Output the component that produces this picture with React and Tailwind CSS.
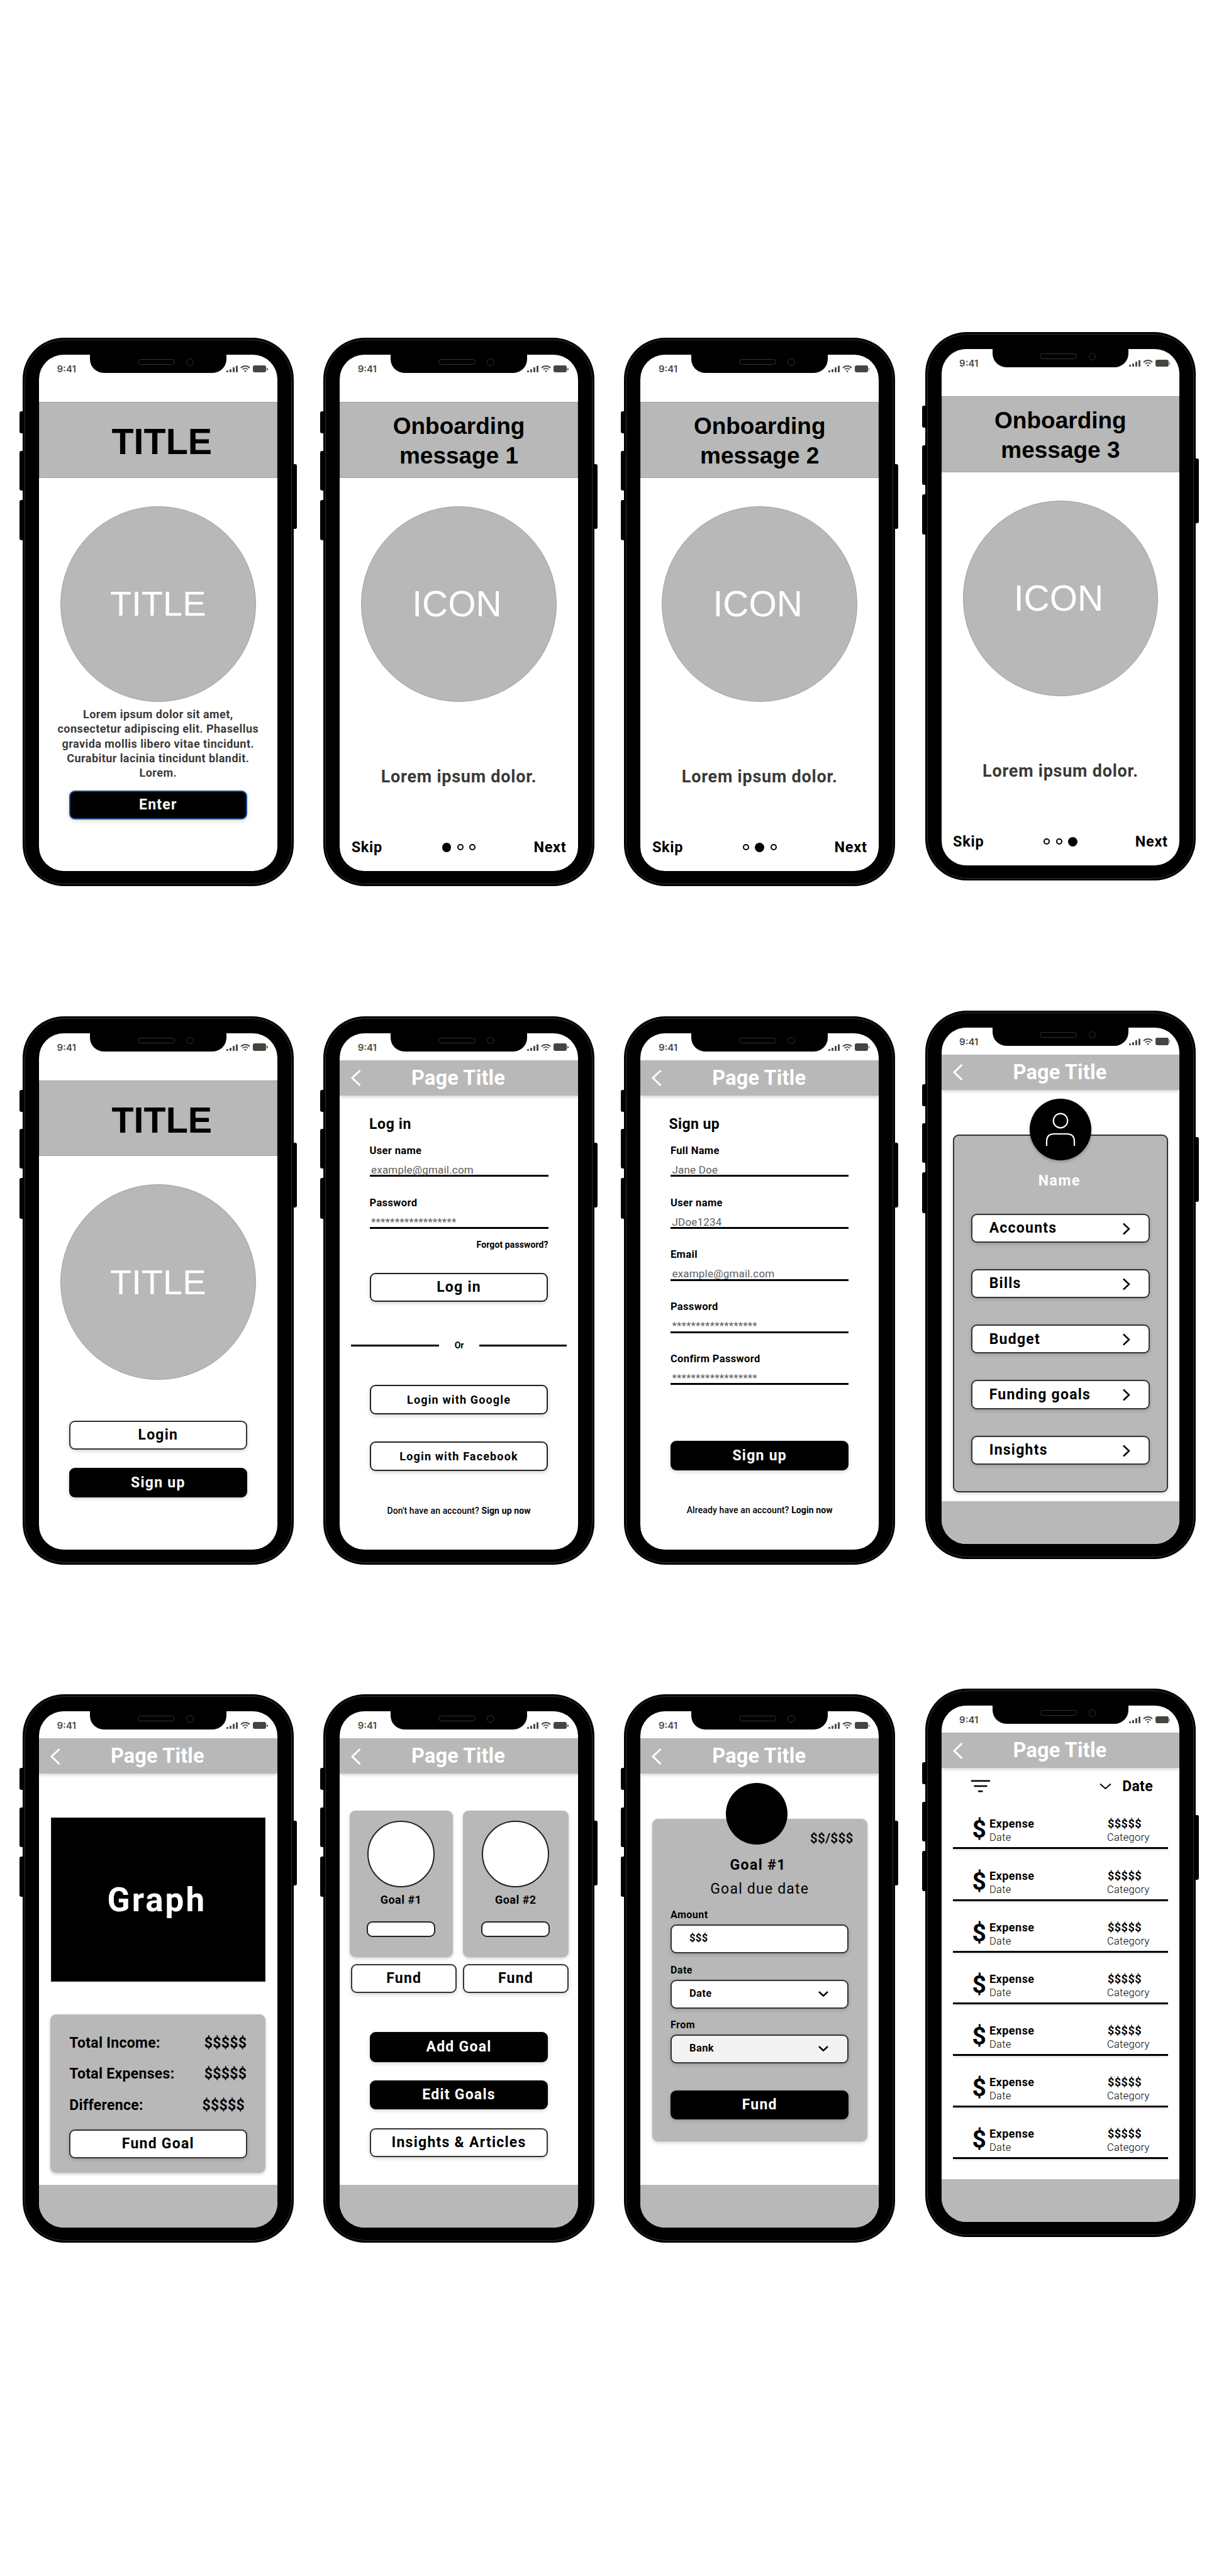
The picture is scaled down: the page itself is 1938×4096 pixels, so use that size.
import React from "react";
import clsx from "clsx";

const BTN_TEXT = "text-[23px] font-bold tracking-[1.25px]";

function StatusBar() {
  return (
    <div className="flex h-[43.3px] w-full shrink-0 items-start justify-between pl-[28.5px] pr-[15px] pt-[12px] text-[#4a4a45]">
      <span className="font-['Inter'] text-[15px] leading-[21px] font-semibold">9:41</span>
      <div className="flex h-[21px] items-center">
        <svg className="h-[11px] w-[18px]" viewBox="0 0 18 11" fill="currentColor">
          <rect x="0" y="8" width="3" height="3" rx="0.8" />
          <rect x="5" y="6" width="3" height="5" rx="0.8" />
          <rect x="10" y="3" width="3" height="8" rx="0.8" />
          <rect x="15" y="0.5" width="3" height="10.5" rx="0.8" />
        </svg>
        <svg className="ml-[4px] h-[11px] w-[16px]" viewBox="0 0 16 11" fill="none" stroke="currentColor" strokeWidth="1.8">
          <path d="M1 4 C5 0 11 0 15 4" />
          <path d="M3.8 6.6 C6.2 4.3 9.8 4.3 12.2 6.6" />
          <path d="M8 11 L5.9 8.7 C7.1 7.7 8.9 7.7 10.1 8.7 Z" fill="currentColor" stroke="none" />
        </svg>
        <span className="ml-[4px] h-[11.5px] w-[21px] rounded-[3px] bg-[#45453f]" />
        <span className="ml-[1px] h-[4px] w-[1.5px] rounded-r-full bg-[#45453f]" />
      </div>
    </div>
  );
}

function Phone({ raised, footer, children }) {
  return (
    <div className={clsx("relative h-[872px] w-[430.7px] shrink-0", raised)}>
      <span className="absolute top-[117px] -left-[5px] h-[35px] w-[8px] rounded-l-[3px] bg-black" />
      <span className="absolute top-[179.5px] -left-[5px] h-[63px] w-[8px] rounded-l-[3px] bg-black" />
      <span className="absolute top-[257.5px] -left-[5px] h-[64.5px] w-[8px] rounded-l-[3px] bg-black" />
      <span className="absolute top-[201px] -right-[5px] h-[103px] w-[8px] rounded-r-[3px] bg-black" />
      <div className="relative h-full w-full rounded-[66px] bg-black px-[26px] pt-[27px] pb-[24px]">
        <div className="pointer-events-none absolute inset-[3px] rounded-[63px] border border-[#333]" />
        <div className="relative flex h-full w-full flex-col items-center overflow-hidden rounded-[39px] bg-white">
          <div className="absolute top-0 left-[81px] h-[29.3px] w-[216.6px] rounded-b-[22px] bg-black">
            <span className="absolute top-[7px] left-[75.5px] h-[9px] w-[59px] rounded-full border border-[#333]" />
            <span className="absolute top-[6px] left-[153px] h-[11.5px] w-[11.5px] rounded-full border border-[#333]" />
          </div>
          <StatusBar />
          {children}
          {footer && <div className="mt-auto h-[67.6px] w-full shrink-0 bg-[#b8b8b8]" />}
        </div>
      </div>
    </div>
  );
}

function Banner({ children }) {
  return (
    <div className="mt-[32px] flex h-[120.3px] w-full shrink-0 items-center justify-center border border-[#a0a0a0] bg-[#b8b8b8] font-['Liberation_Sans'] font-bold text-black">
      {children}
    </div>
  );
}

function Disc({ children }) {
  return (
    <div className="mt-[45.3px] flex h-[310.8px] w-[310.8px] shrink-0 items-center justify-center rounded-full border border-[#a0a0a0] bg-[#b8b8b8] font-['Liberation_Sans'] text-[56px] text-white">
      {children}
    </div>
  );
}

function Button({ dark, className, children }) {
  return (
    <div
      className={clsx(
        "flex w-[283.5px] shrink-0 items-center rounded-[9px] border-2 shadow-[0_2px_6px_rgba(0,0,0,0.18)]",
        dark ? "bg-black text-white" : "bg-white text-black",
        className
      )}
    >
      {children}
    </div>
  );
}

function Label({ className, children }) {
  return <span className={clsx("relative top-[0.5px] w-full text-center", className ?? BTN_TEXT)}>{children}</span>;
}

function PageHeader() {
  return (
    <div className="grid h-[56px] w-full shrink-0 grid-cols-[50px_1fr_50px] items-center bg-[#b8b8b8] text-white shadow-[0_2px_5px_rgba(0,0,0,0.2)]">
      <svg className="ml-[17px] h-[28px] w-[17px]" viewBox="0 0 17 28" fill="none" stroke="currentColor" strokeWidth="3">
        <path d="M15.5 2 L3 14 L15.5 26" />
      </svg>
      <span className="-ml-[2px] text-center text-[32.5px] leading-[57px] font-bold tracking-[0.15px]">Page Title</span>
    </div>
  );
}

function TitleScreen({ children }) {
  return (
    <>
      <Banner>
        <span className="relative top-[3px] left-[6px] text-[57.5px]">TITLE</span>
      </Banner>
      <Disc>TITLE</Disc>
      {children}
    </>
  );
}

function Welcome() {
  return (
    <TitleScreen>
      <p className="mt-[8px] h-[117px] w-[340px] text-center text-[18px] leading-[23.4px] font-bold tracking-[0.44px] text-[#3a3a38]">
        Lorem ipsum dolor sit amet,
        <br />
        consectetur adipiscing elit. Phasellus
        <br />
        gravida mollis libero vitae tincidunt.
        <br />
        Curabitur lacinia tincidunt blandit.
        <br />
        Lorem.
      </p>
      <Button dark className="mt-[16px] h-[46.5px] border-[#1c4f94]">
        <Label>Enter</Label>
      </Button>
    </TitleScreen>
  );
}

function Onboarding({ step }) {
  return (
    <>
      <Banner>
        <p className="relative top-[1.5px] text-center text-[37px] leading-[47px]">
          Onboarding
          <br />
          message {step}
        </p>
      </Banner>
      <Disc>
        <span className="relative -left-[3px] text-[57px]">ICON</span>
      </Disc>
      <p className="mt-[102px] h-[34px] text-[27px] leading-[34px] font-bold tracking-[0.76px] text-[#3a3a38]">Lorem ipsum dolor.</p>
      <div className="mt-[78px] grid h-[32px] w-full grid-cols-3 items-center px-[18.5px] text-[23.5px] font-bold tracking-[0.7px]">
        <span>Skip</span>
        <div className="flex items-center justify-center gap-[9.5px]">
          {[1, 2, 3].map((n) => (
            <span
              key={n}
              className={clsx("rounded-full", n === step ? "h-[14.6px] w-[14.6px] bg-black" : "h-[10px] w-[10px] border-2 border-black")}
            />
          ))}
        </div>
        <span className="text-right">Next</span>
      </div>
    </>
  );
}

function Entry() {
  return (
    <TitleScreen>
      <Button className="mt-[64.7px] h-[46.5px] border-[#333]">
        <Label>Login</Label>
      </Button>
      <Button dark className="mt-[28.4px] h-[47px] border-black">
        <Label>Sign up</Label>
      </Button>
    </TitleScreen>
  );
}

function Field({ label, value, first }) {
  return (
    <div className={clsx("w-full border-b-[3px] border-black", first ? "mt-[17px]" : "mt-[30.3px]")}>
      <div className="relative top-[1px] h-[20px] text-[16.5px] leading-[20px] font-bold tracking-[0.35px]">{label}</div>
      <div className="relative top-[1.5px] mt-[9.5px] h-[20px] pl-[2.5px] text-[17px] leading-[20px] tracking-[0.2px] text-[#606060]">{value}</div>
    </div>
  );
}

const STARS = "******************";

function Login() {
  return (
    <>
      <PageHeader />
      <div className="mt-[30px] flex w-[284px] flex-col">
        <h2 className="relative top-[1px] -ml-[0.5px] h-[30px] text-[23px] leading-[30px] font-bold tracking-[0.6px]">Log in</h2>
        <Field first label="User name" value="example@gmail.com" />
        <Field label="Password" value={STARS} />
        <div className="mt-[15px] h-[20px] text-right text-[14px] leading-[20px] font-bold tracking-[0.1px]">Forgot password?</div>
      </div>
      <Button className="mt-[35px] h-[46px] border-[#222]">
        <Label>Log in</Label>
      </Button>
      <div className="mt-[58px] flex h-[22px] w-[342.5px] items-center">
        <span className="h-[3px] w-[139.5px] bg-black" />
        <span className="flex-1 text-center text-[14px] leading-[22px] font-bold">Or</span>
        <span className="h-[3px] w-[138.5px] bg-black" />
      </div>
      <Button className="mt-[52px] h-[46.5px] border-[#222]">
        <Label className="text-[18px] font-bold tracking-[1.15px]">Login with Google</Label>
      </Button>
      <Button className="mt-[43px] h-[47px] border-[#222]">
        <Label className="text-[18px] font-bold tracking-[1.15px]">Login with Facebook</Label>
      </Button>
      <p className="mt-[53px] h-[20px] text-[14px] leading-[20px] font-medium tracking-[0.12px]">
        Don't have an account? <b className="font-bold">Sign up now</b>
      </p>
    </>
  );
}

function SignUp() {
  return (
    <>
      <PageHeader />
      <div className="mt-[30px] flex w-[283.5px] flex-col">
        <h2 className="relative top-[1px] -ml-[2.5px] h-[30px] text-[23px] leading-[30px] font-bold tracking-[0.4px]">Sign up</h2>
        <Field first label="Full Name" value="Jane Doe" />
        <Field label="User name" value="JDoe1234" />
        <Field label="Email" value="example@gmail.com" />
        <Field label="Password" value={STARS} />
        <Field label="Confirm Password" value={STARS} />
      </div>
      <Button dark className="mt-[88.7px] h-[47px] border-black">
        <Label>Sign up</Label>
      </Button>
      <p className="mt-[53px] h-[20px] text-[14px] leading-[20px] font-medium tracking-[0.12px]">
        Already have an account? <b className="font-bold">Login now</b>
      </p>
    </>
  );
}

function Menu() {
  return (
    <>
      <PageHeader />
      <div className="relative mt-[71.5px] flex h-[568.5px] w-[341.7px] shrink-0 flex-col items-center rounded-[9px] border-2 border-[#333] bg-[#b8b8b8] shadow-[0_2px_5px_rgba(0,0,0,0.15)]">
        <div className="absolute -top-[59.5px] left-[120px] flex h-[98px] w-[98px] justify-center rounded-full bg-black shadow-[0_2px_5px_rgba(0,0,0,0.25)]">
          <svg className="mt-[22.5px] h-[54px] w-[48px]" viewBox="0 0 48 54" fill="none" stroke="white" strokeWidth="2.2">
            <circle cx="24" cy="13" r="11.3" />
            <path d="M2 53 V46 Q2 34 14 34 H34 Q46 34 46 46 V53" />
          </svg>
        </div>
        <p className="mt-[57px] mr-[3px] h-[30px] text-[23px] leading-[30px] font-bold tracking-[1.6px] text-white">Name</p>
        <div className="mt-[36.5px] flex flex-col gap-[42px]">
          {["Accounts", "Bills", "Budget", "Funding goals", "Insights"].map((item) => (
            <Button key={item} className="h-[46.2px] justify-between border-[#333] pr-[28px] pl-[26.5px]">
              <span className={clsx("relative top-[0.5px]", BTN_TEXT)}>{item}</span>
              <svg className="mt-[2px] h-[20px] w-[14px]" viewBox="0 0 14 20" fill="none" stroke="black" strokeWidth="2.5">
                <path d="M2 1.5 L11 10 L2 18.5" />
              </svg>
            </Button>
          ))}
        </div>
      </div>
    </>
  );
}

function Summary() {
  return (
    <>
      <PageHeader />
      <div className="mt-[70.2px] flex h-[260.3px] w-[341.7px] shrink-0 items-center justify-center border border-[#222] bg-black pt-[3px] pr-[4px] text-[53px] font-bold tracking-[3px] text-white">
        Graph
      </div>
      <div className="mt-[52.7px] flex h-[252px] w-[342px] shrink-0 flex-col items-center rounded-[9px] bg-[#b8b8b8] pt-[21px] shadow-[0_2px_5px_rgba(0,0,0,0.2)]">
        {[
          ["Total Income:", ""],
          ["Total Expenses:", ""],
          ["Difference:", "mr-[3.3px]"],
        ].map(([name, shift]) => (
          <div key={name} className="flex h-[49.5px] w-[282px] items-center justify-between text-[23px] font-bold tracking-[0.3px]">
            <span>{name}</span>
            <span className={shift}>$$$$$</span>
          </div>
        ))}
        <Button className="mt-[13px] h-[46.5px] border-[#333]">
          <Label>Fund Goal</Label>
        </Button>
      </div>
    </>
  );
}

function GoalCard({ name, className }) {
  return (
    <div className={clsx("flex h-[233px] flex-col items-center rounded-[9px] bg-[#b8b8b8] pt-[16px] shadow-[0_2px_5px_rgba(0,0,0,0.2)]", className)}>
      <span className="h-[106px] w-[107px] rounded-full border-2 border-[#222] bg-white" />
      <span className="mt-[8px] h-[24px] text-[18px] leading-[24px] font-bold tracking-[0.5px]">{name}</span>
      <span className="mt-[22px] h-[25px] w-[109px] rounded-[9px] border-2 border-[#222] bg-white" />
    </div>
  );
}

function Goals() {
  return (
    <>
      <PageHeader />
      <div className="mt-[58.3px] flex w-[348px] gap-[16.5px]">
        <GoalCard name="Goal #1" className="w-[164px]" />
        <GoalCard name="Goal #2" className="w-[167.5px]" />
      </div>
      <div className="mt-[11px] ml-[3px] flex w-[345.5px] gap-[10px]">
        <Button className="h-[46.5px] !w-[168px] border-[#333]">
          <Label>Fund</Label>
        </Button>
        <Button className="h-[46.5px] !w-[167.5px] border-[#333]">
          <Label>Fund</Label>
        </Button>
      </div>
      <Button dark className="mt-[62px] h-[47.5px] border-black">
        <Label>Add Goal</Label>
      </Button>
      <Button dark className="mt-[29px] h-[46.5px] border-black">
        <Label>Edit Goals</Label>
      </Button>
      <Button className="mt-[29.5px] h-[46.5px] border-[#333]">
        <Label>Insights &amp; Articles</Label>
      </Button>
    </>
  );
}

function ChevronDown() {
  return (
    <svg className="h-[11px] w-[18px]" viewBox="0 0 18 11" fill="none" stroke="black" strokeWidth="2.4">
      <path d="M2 2 L9 8.5 L16 2" />
    </svg>
  );
}

function Select({ label, value, arrow, tint, className }) {
  return (
    <div className={className}>
      <div className="relative top-[0.5px] h-[20px] text-[16px] leading-[20px] font-bold tracking-[0.5px]">{label}</div>
      <Button className={clsx("mt-[5px] h-[46px] justify-between border-[#333] pr-[29px] pl-[28px]", tint)}>
        <span className="text-[16.5px] font-bold tracking-[0.4px]">{value}</span>
        {arrow && <ChevronDown />}
      </Button>
    </div>
  );
}

function FundGoal() {
  return (
    <>
      <PageHeader />
      <div className="relative mt-[71.5px] flex h-[513.7px] w-[342px] shrink-0 flex-col items-center rounded-[9px] bg-[#b8b8b8] shadow-[0_2px_5px_rgba(0,0,0,0.2)]">
        <div className="absolute -top-[57px] left-[117px] h-[98px] w-[98px] rounded-full bg-black" />
        <p className="mt-[16px] mr-[22px] h-[30px] self-end text-[20.5px] leading-[30px] font-semibold tracking-[0.4px]">$$/$$$</p>
        <p className="mt-[13px] mr-[5px] h-[30px] text-[23px] leading-[30px] font-bold tracking-[1.4px]">Goal #1</p>
        <p className="mt-[8px] h-[30px] text-[23px] leading-[30px] tracking-[1.2px]">Goal due date</p>
        <Select className="mt-[16px]" label="Amount" value="$$$" />
        <Select className="mt-[17px]" label="Date" value="Date" arrow />
        <Select className="mt-[16px]" label="From" value="Bank" arrow tint="!bg-[#f3f3f3]" />
        <Button dark className="mt-[43px] h-[46.5px] border-black">
          <Label>Fund</Label>
        </Button>
      </div>
    </>
  );
}

function Expenses() {
  return (
    <>
      <PageHeader />
      <div className="mt-[14px] flex h-[30px] w-[342px] items-center pr-[24px] pl-[29px]">
        <svg className="h-[20px] w-[30px]" viewBox="0 0 30 20" stroke="black" strokeWidth="2.4">
          <path d="M0 1.7 H30 M4.5 10 H25.5 M11 18.3 H18.5" />
        </svg>
        <span className="mr-[17px] ml-auto">
          <svg className="h-[11px] w-[19px]" viewBox="0 0 19 11" fill="none" stroke="black" strokeWidth="2">
            <path d="M1 1.5 L9.5 9 L18 1.5" />
          </svg>
        </span>
        <span className="relative top-[1px] text-[23px] font-bold tracking-[0.3px]">Date</span>
      </div>
      <div className="mt-[3px] flex flex-col">
        {Array.from({ length: 7 }, (_, i) => (
          <div
            key={i}
            className="flex h-[82.15px] w-[342px] items-end border-b-[3px] border-black pb-[4px] pl-[30.5px] shadow-[0_3px_3px_-1px_rgba(0,0,0,0.12)]"
          >
            <span className="h-[46px] w-[27.5px] text-[39px] leading-[44px] font-bold">$</span>
            <div className="flex w-[187px] flex-col">
              <span className="h-[22px] text-[18px] leading-[22px] font-bold tracking-[0.5px]">Expense</span>
              <span className="h-[22px] text-[16.5px] leading-[22px] font-light tracking-[0.3px]">Date</span>
            </div>
            <div className="flex flex-col">
              <span className="h-[22px] pl-[1px] text-[18px] leading-[22px] font-bold tracking-[0.5px]">$$$$$</span>
              <span className="h-[22px] text-[16.5px] leading-[22px] font-light tracking-[0.3px]">Category</span>
            </div>
          </div>
        ))}
      </div>
    </>
  );
}

export default function App() {
  return (
    <main className="flex h-[4096px] w-[1938px] flex-col gap-[206.5px] overflow-hidden bg-white pt-[537px] pl-[36px] font-['Roboto',sans-serif] text-black">
      <section className="flex h-[872px] shrink-0 gap-[47.5px]">
        <Phone><Welcome /></Phone>
        <Phone><Onboarding step={1} /></Phone>
        <Phone><Onboarding step={2} /></Phone>
        <Phone raised="-mt-[9px]"><Onboarding step={3} /></Phone>
      </section>
      <section className="flex h-[872px] shrink-0 gap-[47.5px]">
        <Phone><Entry /></Phone>
        <Phone><Login /></Phone>
        <Phone><SignUp /></Phone>
        <Phone raised="-mt-[9px]" footer><Menu /></Phone>
      </section>
      <section className="flex h-[872px] shrink-0 gap-[47.5px]">
        <Phone footer><Summary /></Phone>
        <Phone footer><Goals /></Phone>
        <Phone footer><FundGoal /></Phone>
        <Phone raised="-mt-[9px]" footer><Expenses /></Phone>
      </section>
    </main>
  );
}
